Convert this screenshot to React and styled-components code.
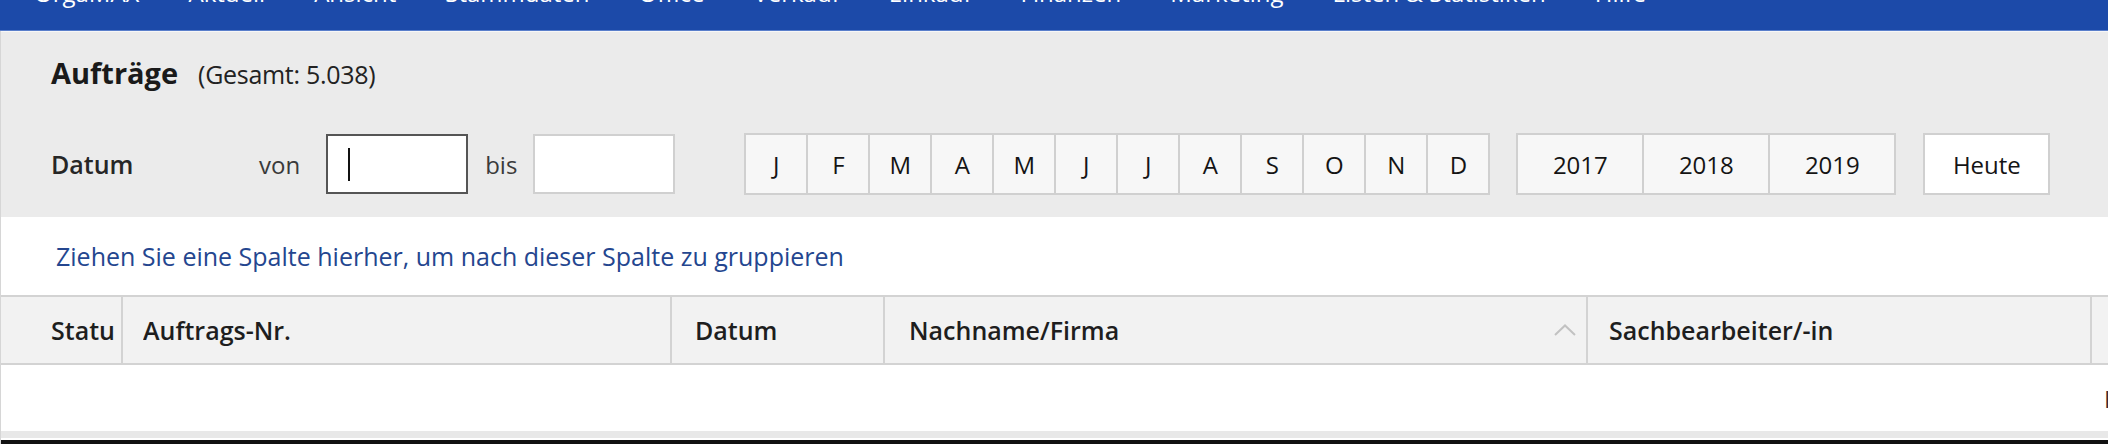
import styled, { createGlobalStyle } from "styled-components";

const GlobalStyle = createGlobalStyle`
  html, body {
    margin: 0;
    padding: 0;
    overflow: hidden;
    background: #ffffff;
  }
  body {
    font-family: "Open Sans", "Noto Sans", sans-serif;
    color: #1e1e1e;
  }
  * {
    box-sizing: border-box;
  }
`;

const MenuBar = styled.nav`
  display: flex;
  gap: 49px;
  height: 31px;
  padding-left: 34px;
  overflow: hidden;
  background: #1c4aa9;
  border-bottom: 1px solid #5a7fcb;
`;

const MenuItem = styled.span`
  margin-top: -24px;
  color: #ffffff;
  font-size: 24px;
  line-height: 33px;
  white-space: nowrap;
`;

const Page = styled.div`
  border-left: 1px solid #d6d6d6;
`;

const FilterPanel = styled.section`
  padding: 22px 0 22px 50px;
  background: #ebebeb;
  border-top: 1px solid #f7f7f7;
`;

const TitleRow = styled.div`
  display: flex;
  align-items: baseline;
  gap: 20px;
  height: 38px;
`;

const Title = styled.h1`
  margin: 0;
  font-size: 29px;
  font-weight: 700;
  line-height: 38px;
  color: #1a1a1a;
`;

const Count = styled.span`
  font-size: 25px;
  letter-spacing: -0.3px;
  color: #222;
`;

const FilterRow = styled.div`
  display: flex;
  align-items: center;
  height: 62px;
  margin-top: 41px;
`;

const FilterLabel = styled.span`
  width: 208px;
  font-size: 25px;
  font-weight: 600;
  color: #262626;
`;

const RangeWord = styled.span`
  margin-right: ${(p) => p.$gap}px;
  font-size: 24px;
  color: #3a3a3a;
`;

const DateBox = styled.div`
  display: flex;
  align-items: center;
  width: 142px;
  height: 60px;
  margin-right: 17px;
  padding-left: 20px;
  background: #ffffff;
  border: 2px solid ${(p) => (p.$active ? "#555555" : "#d0d0d0")};
`;

const Caret = styled.span`
  width: 2px;
  height: 33px;
  background: #111;
`;

const SegGroup = styled.div`
  display: flex;
  margin-left: ${(p) => p.$offset}px;
`;

const SegButton = styled.button`
  width: ${(p) => p.$width}px;
  height: 62px;
  padding: 0;
  font-family: inherit;
  font-size: 24px;
  color: #141414;
  background: ${(p) => (p.$plain ? "#ffffff" : "#f7f7f7")};
  border: 2px solid #d0d0d0;

  & + & {
    margin-left: -2px;
  }
`;

const GroupHint = styled.div`
  display: flex;
  align-items: center;
  height: 78px;
  padding-left: 55px;
  font-size: 25px;
  color: #24468f;
`;

const GridWrap = styled.div`
  overflow: hidden;
`;

const columns = "122px 549px 213px 703px 504px 420px";

const HeaderRow = styled.div`
  display: grid;
  grid-template-columns: ${columns};
  height: 70px;
  background: #f2f2f2;
  border-top: 2px solid #d3d3d3;
  border-bottom: 2px solid #d3d3d3;
`;

const HeaderCell = styled.div`
  display: flex;
  align-items: center;
  min-width: 0;
  padding: 0 6px 0 ${(p) => p.$pad}px;
  border-right: 2px solid #d3d3d3;
  font-size: 25px;
  font-weight: 600;
  color: #1e1e1e;
`;

const HeaderLabel = styled.span`
  min-width: 0;
  overflow: hidden;
  white-space: nowrap;
`;

const SortMark = styled.svg`
  flex: none;
  margin: 0 4px 0 auto;
`;

const DataRow = styled.div`
  display: grid;
  grid-template-columns: ${columns};
  height: 66px;
`;

const DataCell = styled.div`
  display: flex;
  align-items: center;
  padding-left: ${(p) => p.$pad}px;
  font-size: 24px;
  color: #3a2a33;
  white-space: nowrap;
  overflow: hidden;
`;

const ScrollTrack = styled.div`
  height: 7px;
  background: #e8e8e8;
`;

const Footer = styled.div`
  height: 40px;
  margin-top: 2px;
  background: #2a2a2a;
  border-top: 5px solid #111;
`;

const menu = [
  "OrgaMAX",
  "Aktuell",
  "Ansicht",
  "Stammdaten",
  "Office",
  "Verkauf",
  "Einkauf",
  "Finanzen",
  "Marketing",
  "Listen & Statistiken",
  "Hilfe",
];

const months = ["J", "F", "M", "A", "M", "J", "J", "A", "S", "O", "N", "D"];
const years = ["2017", "2018", "2019"];

const headers = [
  { label: "Status", pad: 50 },
  { label: "Auftrags-Nr.", pad: 20 },
  { label: "Datum", pad: 23 },
  { label: "Nachname/Firma", pad: 24, sorted: true },
  { label: "Sachbearbeiter/-in", pad: 21 },
  { label: "", pad: 20 },
];

export default function App() {
  return (
    <>
      <GlobalStyle />
      <MenuBar>
        {menu.map((item) => (
          <MenuItem key={item}>{item}</MenuItem>
        ))}
      </MenuBar>
      <Page>
        <FilterPanel>
          <TitleRow>
            <Title>Aufträge</Title>
            <Count>(Gesamt: 5.038)</Count>
          </TitleRow>
          <FilterRow>
            <FilterLabel>Datum</FilterLabel>
            <RangeWord $gap={26}>von</RangeWord>
            <DateBox $active>
              <Caret />
            </DateBox>
            <RangeWord $gap={16}>bis</RangeWord>
            <DateBox />
            <SegGroup $offset={52}>
              {months.map((m, i) => (
                <SegButton key={i} $width={64}>
                  {m}
                </SegButton>
              ))}
            </SegGroup>
            <SegGroup $offset={26}>
              {years.map((y) => (
                <SegButton key={y} $width={128}>
                  {y}
                </SegButton>
              ))}
            </SegGroup>
            <SegGroup $offset={27}>
              <SegButton $width={127} $plain>
                Heute
              </SegButton>
            </SegGroup>
          </FilterRow>
        </FilterPanel>
        <GroupHint>
          Ziehen Sie eine Spalte hierher, um nach dieser Spalte zu gruppieren
        </GroupHint>
        <GridWrap>
          <HeaderRow>
            {headers.map((h, i) => (
              <HeaderCell key={i} $pad={h.pad}>
                <HeaderLabel>{h.label}</HeaderLabel>
                {h.sorted && (
                  <SortMark width="22" height="12" viewBox="0 0 22 12">
                    <polyline
                      points="1,11 11,1.5 21,11"
                      fill="none"
                      stroke="#c2c2c2"
                      strokeWidth="2"
                    />
                  </SortMark>
                )}
              </HeaderCell>
            ))}
          </HeaderRow>
          <DataRow>
            <DataCell $pad={0} />
            <DataCell $pad={0} />
            <DataCell $pad={0} />
            <DataCell $pad={0} />
            <DataCell $pad={0} />
            <DataCell $pad={12}>Hinweis</DataCell>
          </DataRow>
        </GridWrap>
        <ScrollTrack />
        <Footer />
      </Page>
    </>
  );
}
